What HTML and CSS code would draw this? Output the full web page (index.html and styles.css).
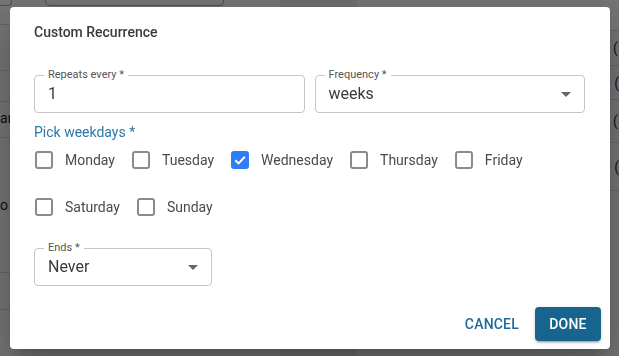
FILE: index.html
```html
<!DOCTYPE html>
<html>
<head>
<meta charset="utf-8">
<link rel="stylesheet" href="styles.css">
</head>
<body>
<div class="page">
  <div class="left-panel">
    <div class="search-strip"><div class="corner-box"></div><div class="search-box"></div></div>
    <div class="lrow r1"></div>
    <div class="lrow r2"></div>
    <div class="lrow r3"></div>
    <div class="lrow r4">a<span class="red">r</span></div>
    <div class="lrow r5">o</div>
    <div class="lrow r6"></div>
    <div class="lrow r7"></div>
  </div>
  <div class="mid-col"></div>
  <div class="right-panel">
    <div class="rrow h1"><span class="rtext bold">Sum</span></div>
    <div class="rrow h2"><span class="rtext">15 (</span></div>
    <div class="rrow h3"><span class="rtext">0 (</span></div>
    <div class="rrow h4"><span class="rtext">12 (</span></div>
    <div class="rrow h5"><span class="rtext">0 (</span></div>
  </div>
</div>

<div class="overlay">
  <div class="dialog">
    <div class="title">Custom Recurrence</div>

    <div class="fields-row">
      <div class="field grow">
        <span class="field-label">Repeats every *</span>
        <span class="field-value">1</span>
      </div>
      <div class="field grow">
        <span class="field-label">Frequency *</span>
        <span class="field-value">weeks</span>
        <span class="arrow"></span>
      </div>
    </div>

    <div class="section-label">Pick weekdays *</div>

    <div class="days">
      <label class="day"><span class="box"></span><span class="day-name">Monday</span></label>
      <label class="day"><span class="box"></span><span class="day-name">Tuesday</span></label>
      <label class="day"><span class="box checked"><svg viewBox="0 0 18 18" width="18" height="18"><path d="M4.2 9.2 L7.6 12.4 L13.8 5.8" fill="none" stroke="#fff" stroke-width="2"/></svg></span><span class="day-name">Wednesday</span></label>
      <label class="day"><span class="box"></span><span class="day-name">Thursday</span></label>
      <label class="day"><span class="box"></span><span class="day-name">Friday</span></label>
      <label class="day"><span class="box"></span><span class="day-name">Saturday</span></label>
      <label class="day"><span class="box"></span><span class="day-name">Sunday</span></label>
    </div>

    <div class="field ends">
      <span class="field-label">Ends *</span>
      <span class="field-value">Never</span>
      <span class="arrow"></span>
    </div>

    <div class="actions">
      <button class="btn-text">CANCEL</button>
      <button class="btn-primary">DONE</button>
    </div>
  </div>
</div>
</body>
</html>
```

FILE: styles.css
```css
* { box-sizing: border-box; }
html, body { margin: 0; padding: 0; }
body {
  width: 619px;
  height: 356px;
  overflow: hidden;
  font-family: Roboto, "Liberation Sans", Arial, sans-serif;
  background: #fff;
}

/* background page */
.page {
  display: flex;
  height: 356px;
}
.left-panel {
  width: 288px;
  display: flex;
  flex-direction: column;
}
.search-strip {
  height: 25px;
  border-bottom: 1px solid #ddd;
  display: flex;
  align-items: flex-start;
  gap: 33px;
}
.corner-box {
  width: 12px;
  height: 6px;
  border-right: 1px solid #aaa;
  border-bottom: 1px solid #aaa;
  border-radius: 0 0 4px 0;
}
.search-box {
  width: 179px;
  height: 6px;
  border: 1px solid #aaa;
  border-top: none;
  border-radius: 0 0 5px 5px;
}
.lrow {
  border-bottom: 1px solid #ddd;
  font-size: 14px;
  color: #222;
  display: flex;
  align-items: center;
}
.red { color: #800; }
.r1 { height: 46px; }
.r2 { height: 31px; }
.r3 { height: 36px; }
.r4 { height: 0; border: none; position: relative; top: -20px; }
.r5 { height: 135px; border-bottom: 1px solid #ddd; }
.r6 { height: 37px; }
.r7 { height: 40px; border: none; }
.mid-col {
  width: 79px;
  background: #f0f0f0;
}
.right-panel {
  flex: 1;
  display: flex;
  flex-direction: column;
}
.rrow {
  border-bottom: 1px solid #ddd;
  display: flex;
  align-items: center;
  font-size: 14px;
  color: #333;
  padding-left: 239px;
  white-space: nowrap;
  overflow: hidden;
}
.bold { font-weight: 700; margin-left: -14px; }
.h1 { height: 31px; }
.h2 { height: 35px; padding-left: 237px; }
.h3 { height: 34px; padding-left: 246px; }
.h4 { height: 43px; padding-left: 237px; }
.h5 { height: 48px; padding-left: 246px; }

/* overlay */
.overlay {
  position: fixed;
  inset: 0;
  background: rgba(0, 0, 0, 0.54);
  padding: 7px 0 0 10px;
}
.dialog {
  width: 600px;
  height: 342px;
  background: #fff;
  border-radius: 4px;
  box-shadow: 0 11px 15px -7px rgba(0,0,0,.2), 0 24px 38px 3px rgba(0,0,0,.14), 0 9px 46px 8px rgba(0,0,0,.12);
  padding: 15px 25px 0 24px;
  display: flex;
  flex-direction: column;
  color: #333;
}
.title {
  font-size: 14px;
  line-height: 20px;
  font-weight: 500;
  color: #3a3a3a;
}
.fields-row {
  display: flex;
  gap: 10px;
  margin-top: 33px;
}
.field {
  position: relative;
  height: 38px;
  border: 1px solid #c6c6c6;
  border-radius: 4px;
  display: flex;
  align-items: center;
  padding: 0 13px;
}
.grow { flex: 1; }
.field-label {
  position: absolute;
  left: 9px;
  top: -8px;
  background: #fff;
  padding: 0 4px;
  font-size: 11px;
  line-height: 14px;
  color: #555;
}
.field-value {
  font-size: 16px;
  color: #3a3a3a;
  line-height: 20px;
  margin-top: -1px;
}
.arrow {
  position: absolute;
  right: 13px;
  top: 16px;
  width: 0;
  height: 0;
  border-left: 5px solid transparent;
  border-right: 5px solid transparent;
  border-top: 5px solid #666;
}
.section-label {
  margin-top: 9px;
  font-size: 14px;
  line-height: 20px;
  color: #2b78a6;
}
.days {
  display: flex;
  flex-wrap: wrap;
  column-gap: 17px;
  row-gap: 29px;
  margin-top: 9px;
  padding-left: 1px;
  width: 520px;
}
.day {
  display: flex;
  align-items: center;
  gap: 12px;
  height: 18px;
  font-size: 14px;
  color: #4a4a4a;
}
.box {
  width: 18px;
  height: 18px;
  border: 2px solid #8a8a8a;
  border-radius: 3px;
  display: flex;
  align-items: center;
  justify-content: center;
}
.box.checked {
  border: none;
  background: #2f7ff4;
}
.box svg { display: block; }
.ends {
  width: 178px;
  margin-top: 32px;
}
.actions {
  margin-top: auto;
  margin-right: -16px;
  margin-bottom: 8px;
  display: flex;
  justify-content: flex-end;
  align-items: center;
  gap: 8px;
}
.btn-text, .btn-primary {
  font-family: Roboto, "Liberation Sans", Arial, sans-serif;
  font-size: 14px;
  font-weight: 500;
  letter-spacing: 0.2px;
  border: none;
  height: 34px;
  border-radius: 4px;
  cursor: pointer;
}
.btn-text {
  background: transparent;
  color: #1f6c99;
  padding: 0 8px;
}
.btn-primary {
  background: #17658f;
  color: #fff;
  padding: 0;
  width: 66px;
  box-shadow: 0 3px 1px -2px rgba(0,0,0,.2), 0 2px 2px 0 rgba(0,0,0,.14), 0 1px 5px 0 rgba(0,0,0,.12);
}
```
